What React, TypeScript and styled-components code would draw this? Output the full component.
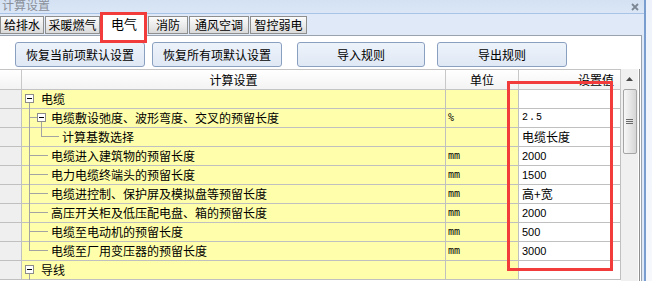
import React from 'react';
import styled, { createGlobalStyle } from 'styled-components';

const Global = createGlobalStyle`
  html, body { margin: 0; padding: 0; background: #dfe9f7; }
  body { width: 652px; height: 281px; overflow: hidden; }
  #root { width: 652px; height: 281px; }
`;

const CJK = `"Noto Sans CJK SC", "Noto Sans", sans-serif`;

const Window = styled.div`
  position: relative;
  width: 652px;
  height: 281px;
  overflow: hidden;
  display: flex;
  font-family: ${CJK};
  font-size: 12px;
  color: #000;
`;

const Main = styled.div`
  width: 644px;
  display: flex;
  flex-direction: column;
  background: #dfe9f7;
`;

const Frame = styled.div`
  width: 8px;
  border-left: 2px solid #7a9dcf;
  background: linear-gradient(#eef3fb, #f6f8fc);
  box-sizing: border-box;
`;

const TitleBar = styled.div`
  height: 14px;
  box-sizing: border-box;
  border-bottom: 1px solid #a9c3e6;
  background: linear-gradient(#d3e1f3, #dbe7f6);
  display: flex;
  align-items: flex-start;
  justify-content: space-between;
  padding: 0 5px 0 2px;
  overflow: hidden;
`;

const TitleText = styled.span`
  color: #8a8f99;
  font-size: 12px;
  line-height: 12px;
  margin-top: -1px;
`;

const TabBar = styled.div`
  height: 21px;
  display: flex;
  align-items: flex-end;
  gap: 1px;
`;

const Tab = styled.div<{ $w: number; $active?: boolean }>`
  width: ${(p) => p.$w}px;
  box-sizing: border-box;
  height: ${(p) => (p.$active ? 23 : 18)}px;
  margin-bottom: ${(p) => (p.$active ? -1 : 1)}px;
  position: relative;
  z-index: ${(p) => (p.$active ? 2 : 1)};
  border: 1px solid #8e8e8e;
  border-bottom: ${(p) => (p.$active ? 'none' : '1px solid #8e8e8e')};
  background: ${(p) => (p.$active ? '#ffffff' : 'linear-gradient(#fbfbfb, #e9e9e9 60%, #d9d9d9)')};
  display: flex;
  align-items: center;
  justify-content: center;
  font-size: ${(p) => (p.$active ? 13 : 12)}px;
  line-height: 14px;
  padding-bottom: ${(p) => (p.$active ? 2 : 0)}px;
`;

const Panel = styled.div`
  width: 642px;
  flex: 1;
  box-sizing: border-box;
  background: #ffffff;
  border-top: 1px solid #9aa3ad;
  border-right: 1px solid #9aa3ad;
  display: flex;
  flex-direction: column;
`;

const ButtonRow = styled.div`
  display: flex;
  padding: 6px 0 0 15px;
  height: 25px;
`;

const Button = styled.div<{ $w: number; $gap: number }>`
  width: ${(p) => p.$w}px;
  margin-left: ${(p) => p.$gap}px;
  box-sizing: border-box;
  height: 25px;
  border: 1px solid #8aa0c0;
  border-radius: 3px;
  background: linear-gradient(#eef3fa, #dfe8f5);
  display: flex;
  align-items: center;
  justify-content: center;
  font-size: 12px;
`;

const GridFrame = styled.div`
  margin-top: 2px;
  width: 640px;
  box-sizing: border-box;
  border-right: 1px solid #8f8f8f;
  display: flex;
  flex: 1;
  overflow: hidden;
`;

const Table = styled.div`
  width: 621px;
  display: flex;
  flex-direction: column;
`;

const COLS = '22px 424px 73px 102px';

const HeaderRow = styled.div`
  display: grid;
  grid-template-columns: ${COLS};
  height: 21px;
  box-sizing: border-box;
  border-top: 1px solid #c4c4c4;
  border-bottom: 1px solid #c4c4c4;
  background: linear-gradient(#ffffff, #f3f3f3);
`;

const HeadCell = styled.div<{ $align?: string }>`
  box-sizing: border-box;
  border-right: 1px solid #c8c8c8;
  display: flex;
  align-items: center;
  justify-content: ${(p) => p.$align || 'center'};
  padding-right: ${(p) => (p.$align === 'flex-end' ? '6px' : '0')};
  font-size: 12px;
  line-height: 14px;
  overflow: hidden;
`;

const Row = styled.div`
  display: grid;
  grid-template-columns: ${COLS};
  height: 19px;
`;

const Cell = styled.div<{ $bg: string }>`
  box-sizing: border-box;
  height: 19px;
  border-right: 1px solid #c0c0c0;
  border-bottom: 1px solid #c0c0c0;
  background: ${(p) => p.$bg};
  display: flex;
  align-items: center;
  overflow: visible;
  white-space: nowrap;
`;

const TreeCell = styled(Cell)`
  align-items: flex-start;
`;

const Label = styled.span`
  font-size: 12px;
  line-height: 18px;
`;

const Unit = styled.span`
  font-family: "DejaVu Sans Mono", "Liberation Mono", monospace;
  font-size: 10px;
  color: #000;
  padding-left: 2px;
  line-height: 18px;
`;

const Value = styled.span<{ $mono?: boolean; $cjk?: boolean }>`
  padding-left: 3px;
  font-family: ${(p) => (p.$mono ? '"Liberation Mono", monospace' : p.$cjk ? CJK : '"Liberation Sans", Arial, sans-serif')};
  font-size: ${(p) => (p.$mono ? '10px' : p.$cjk ? '12px' : '11px')};
  letter-spacing: ${(p) => (p.$mono ? '1px' : '0')};
  line-height: 18px;
`;

const ScrollBar = styled.div`
  width: 17px;
  background: #f0f0f0;
  display: flex;
  flex-direction: column;
  align-items: center;
  margin-right: 1px;
`;

const ArrowBtn = styled.div`
  width: 17px;
  height: 18px;
  margin-top: 1px;
  display: flex;
  align-items: center;
  justify-content: center;
`;

const Thumb = styled.div`
  margin-top: 1px;
  width: 14px;
  height: 65px;
  box-sizing: border-box;
  border: 1px solid #a5a5a5;
  border-radius: 2px;
  background: linear-gradient(90deg, #f7f7f7, #e3e3e3 60%, #d5d5d5);
  display: flex;
  align-items: center;
  justify-content: center;
`;

const Annotation = styled.div<{ $x: number; $y: number; $w: number; $h: number }>`
  position: absolute;
  left: ${(p) => p.$x}px;
  top: ${(p) => p.$y}px;
  width: ${(p) => p.$w}px;
  height: ${(p) => p.$h}px;
  box-sizing: border-box;
  border: 3px solid #f23b3b;
  z-index: 10;
  pointer-events: none;
`;

type Kind = 'group' | 'sub' | 'leaf2' | 'leaf3';
interface RowData {
  label: string;
  kind: Kind;
  unit?: string;
  value?: string;
  vtype?: 'mono' | 'cjk' | 'num';
  last?: boolean;
}

const rows: RowData[] = [
  { label: '电缆', kind: 'group' },
  { label: '电缆敷设弛度、波形弯度、交叉的预留长度', kind: 'sub', unit: '%', value: '2.5', vtype: 'mono' },
  { label: '计算基数选择', kind: 'leaf3', value: '电缆长度', vtype: 'cjk' },
  { label: '电缆进入建筑物的预留长度', kind: 'leaf2', unit: 'mm', value: '2000' },
  { label: '电力电缆终端头的预留长度', kind: 'leaf2', unit: 'mm', value: '1500' },
  { label: '电缆进控制、保护屏及模拟盘等预留长度', kind: 'leaf2', unit: 'mm', value: '高+宽', vtype: 'cjk' },
  { label: '高压开关柜及低压配电盘、箱的预留长度', kind: 'leaf2', unit: 'mm', value: '2000' },
  { label: '电缆至电动机的预留长度', kind: 'leaf2', unit: 'mm', value: '500' },
  { label: '电缆至厂用变压器的预留长度', kind: 'leaf2', unit: 'mm', value: '3000', last: true },
  { label: '导线', kind: 'group' },
];

const X0 = 22;
const textX: Record<Kind, number> = { group: 41, sub: 51, leaf2: 51, leaf3: 62 };
const LINE = '#a3a3a3';

const Box: React.FC<{ x: number }> = ({ x }) => (
  <g>
    <rect x={x - X0 + 0.5} y={4.5} width={8} height={8} fill="#fff" stroke="#8c8c8c" />
    <line x1={x - X0 + 2} y1={8.5} x2={x - X0 + 7} y2={8.5} stroke="#000" />
  </g>
);

const V: React.FC<{ x: number; y1: number; y2: number }> = ({ x, y1, y2 }) => (
  <line x1={x - X0 + 0.5} y1={y1} x2={x - X0 + 0.5} y2={y2} stroke={LINE} />
);
const H: React.FC<{ x1: number; x2: number }> = ({ x1, x2 }) => (
  <line x1={x1 - X0} y1={8.5} x2={x2 - X0} y2={8.5} stroke={LINE} />
);

const Guides: React.FC<{ row: RowData }> = ({ row }) => {
  const w = textX[row.kind] - X0;
  return (
    <svg width={w} height={19} style={{ display: 'block', flex: 'none', overflow: 'visible' }}>
      {row.kind === 'group' && (
        <>
          <V x={29} y1={13} y2={19} />
          <Box x={25} />
        </>
      )}
      {row.kind === 'sub' && (
        <>
          <V x={29} y1={0} y2={19} />
          <H x1={29} x2={37} />
          <V x={41} y1={13} y2={19} />
          <Box x={37} />
        </>
      )}
      {row.kind === 'leaf3' && (
        <>
          <V x={29} y1={0} y2={19} />
          <V x={41} y1={0} y2={9} />
          <H x1={41} x2={59} />
        </>
      )}
      {row.kind === 'leaf2' && (
        <>
          <V x={29} y1={0} y2={row.last ? 9 : 19} />
          <H x1={29} x2={48} />
        </>
      )}
    </svg>
  );
};

const tabs = [
  { t: '给排水', w: 44 },
  { t: '采暖燃气', w: 55 },
  { t: '电气', w: 46, active: true },
  { t: '消防', w: 40 },
  { t: '通风空调', w: 60 },
  { t: '智控弱电', w: 57 },
];

const buttons = [
  { t: '恢复当前项默认设置', w: 130, gap: 0 },
  { t: '恢复所有项默认设置', w: 130, gap: 7 },
  { t: '导入规则', w: 128, gap: 15 },
  { t: '导出规则', w: 130, gap: 12 },
];

export default function App() {
  return (
    <>
      <Global />
      <Window>
        <Main>
          <TitleBar>
            <TitleText>计算设置</TitleText>
            <svg width="8" height="8" style={{ marginTop: 3 }}>
              <path d="M1 1 L7 7 M7 1 L1 7" stroke="#7d8794" strokeWidth="1.8" />
            </svg>
          </TitleBar>
          <TabBar>
            {tabs.map((t) => (
              <Tab key={t.t} $w={t.w} $active={t.active}>
                {t.t}
              </Tab>
            ))}
          </TabBar>
          <Panel>
            <ButtonRow>
              {buttons.map((b) => (
                <Button key={b.t} $w={b.w} $gap={b.gap}>
                  {b.t}
                </Button>
              ))}
            </ButtonRow>
            <GridFrame>
              <Table>
                <HeaderRow>
                  <HeadCell />
                  <HeadCell>计算设置</HeadCell>
                  <HeadCell>单位</HeadCell>
                  <HeadCell $align="flex-end">设置值</HeadCell>
                </HeaderRow>
                {rows.map((r, i) => (
                  <Row key={i}>
                    <Cell $bg="#efefef" />
                    <TreeCell $bg="#ffffab">
                      <Guides row={r} />
                      <Label>{r.label}</Label>
                    </TreeCell>
                    <Cell $bg="#ffffab">{r.unit && <Unit>{r.unit}</Unit>}</Cell>
                    <Cell $bg="#ffffff">
                      {r.value && (
                        <Value $mono={r.vtype === 'mono'} $cjk={r.vtype === 'cjk'}>
                          {r.value}
                        </Value>
                      )}
                    </Cell>
                  </Row>
                ))}
              </Table>
              <ScrollBar>
                <ArrowBtn>
                  <svg width="7" height="4">
                    <path d="M0 4 L3.5 0 L7 4 Z" fill="#4a4a4a" />
                  </svg>
                </ArrowBtn>
                <Thumb>
                  <svg width="7" height="6">
                    <path d="M0 0.5 H7 M0 2.5 H7 M0 4.5 H7" stroke="#6a6a6a" />
                  </svg>
                </Thumb>
              </ScrollBar>
            </GridFrame>
          </Panel>
        </Main>
        <Frame />
        <Annotation $x={100} $y={12} $w={47} $h={31} />
        <Annotation $x={507} $y={81} $w={106} $h={190} />
      </Window>
    </>
  );
}
